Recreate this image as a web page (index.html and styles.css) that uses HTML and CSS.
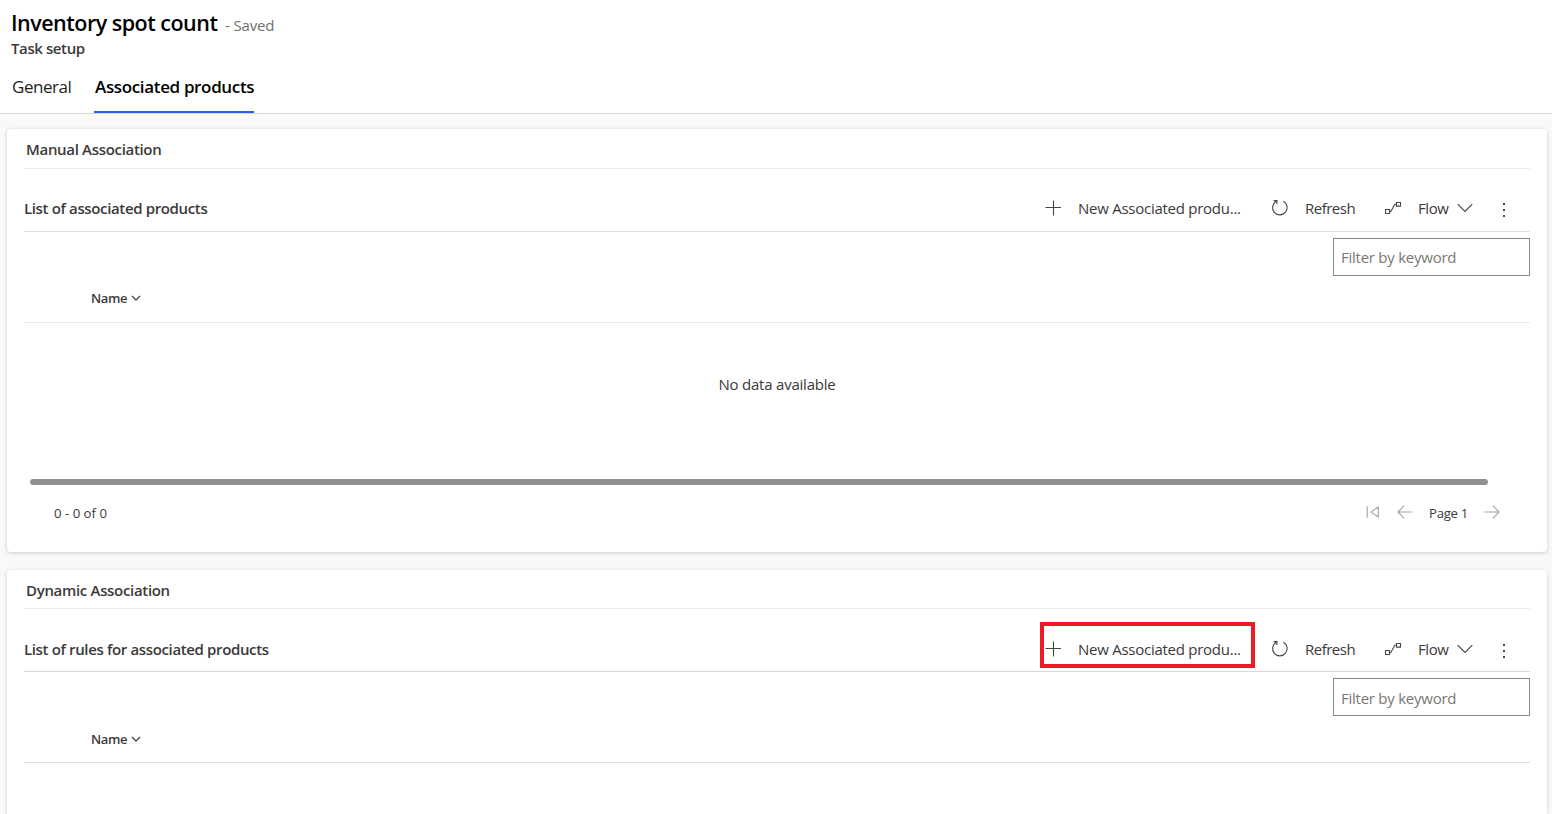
FILE: index.html
```
<!DOCTYPE html>
<html lang="en">
<head>
<meta charset="utf-8">
<title>Inventory spot count</title>
<link rel="stylesheet" href="styles.css">
</head>
<body>
<svg class="defs" aria-hidden="true">
  <symbol id="plus" viewBox="0 0 16 16"><path d="M8.5 .5v15M.5 7.5h16"/></symbol>
  <symbol id="refresh" viewBox="0 0 18 18"><path d="M12.4 2.2A7.3 7.3 0 1 1 5.2 2.3M2.6 1.6H5.9V5"/></symbol>
  <symbol id="flow" viewBox="0 0 18 14"><path d="M1.5 8.5h4v4h-4zM12.5 1.5h4v3.6h-4zM5.5 10.5h1.3L10.8 3.3h1.7"/></symbol>
  <symbol id="chevron" viewBox="0 0 16 10"><path d="M.7 1.2 8 8.5 15.3 1.2"/></symbol>
  <symbol id="sort" viewBox="0 0 10 6"><path d="M1 1l4 4 4-4"/></symbol>
  <symbol id="first" viewBox="0 0 14 14"><path d="M1.2 1.2v11.6M12.3 2v10L5 7z"/></symbol>
  <symbol id="left" viewBox="0 0 16 14"><path d="M15.5 7H1M7.2 .7.9 7l6.3 6.3"/></symbol>
  <symbol id="right" viewBox="0 0 16 14"><path d="M.5 7H15M8.8 .7 15.1 7l-6.3 6.3"/></symbol>
</svg>

<header class="page-header">
  <div class="title-row"><h1 class="title">Inventory spot count</h1><span class="saved">- Saved</span></div>
  <div class="entity">Task setup</div>
  <nav class="tabs"><a class="tab">General</a><a class="tab tab-active">Associated products</a></nav>
</header>

<main class="content">
  <section class="card">
    <h2 class="card-title">Manual Association</h2>
    <div class="toolbar">
      <h3 class="list-title">List of associated products</h3>
      <div class="commands">
        <button class="command command-new"><svg class="i-plus"><use href="#plus"/></svg><span class="new-label">New Associated produ...</span></button>
        <button class="command command-refresh"><svg class="i-refresh"><use href="#refresh"/></svg><span>Refresh</span></button>
        <button class="command command-flow"><svg class="i-flow"><use href="#flow"/></svg><span>Flow</span><svg class="i-chevron"><use href="#chevron"/></svg></button>
        <button class="more" aria-label="More"><i></i><i></i><i></i></button>
      </div>
    </div>
    <div class="filter-row"><input class="filter" placeholder="Filter by keyword"></div>
    <div class="columns"><span>Name</span><svg class="i-sort"><use href="#sort"/></svg></div>
    <div class="empty">No data available</div>
    <div class="scrollbar"></div>
    <footer class="pager">
      <span class="range">0 - 0 of 0</span>
      <svg class="i-first"><use href="#first"/></svg>
      <svg class="i-left"><use href="#left"/></svg>
      <span class="page">Page 1</span>
      <svg class="i-right"><use href="#right"/></svg>
    </footer>
  </section>

  <section class="card card-dynamic">
    <h2 class="card-title">Dynamic Association</h2>
    <div class="toolbar">
      <h3 class="list-title">List of rules for associated products</h3>
      <div class="commands">
        <button class="command command-new highlighted"><svg class="i-plus"><use href="#plus"/></svg><span class="new-label">New Associated produ...</span></button>
        <button class="command command-refresh"><svg class="i-refresh"><use href="#refresh"/></svg><span>Refresh</span></button>
        <button class="command command-flow"><svg class="i-flow"><use href="#flow"/></svg><span>Flow</span><svg class="i-chevron"><use href="#chevron"/></svg></button>
        <button class="more" aria-label="More"><i></i><i></i><i></i></button>
      </div>
    </div>
    <div class="filter-row"><input class="filter" placeholder="Filter by keyword"></div>
    <div class="columns"><span>Name</span><svg class="i-sort"><use href="#sort"/></svg></div>
  </section>
</main>
</body>
</html>
```
FILE: styles.css
```
*, *::after { box-sizing: border-box; }
body {
  margin: 0;
  height: 814px;
  overflow: hidden;
  display: flex;
  flex-direction: column;
  background: #faf9f8;
  color: #3b3a39;
  font: 400 15px/20px "Open Sans", "Noto Sans", sans-serif;
}
h1, h2, h3 { margin: 0; }
svg { flex: none; fill: none; stroke: #484644; stroke-width: 1.1; }
.defs { position: absolute; width: 0; height: 0; }

/* Header */
.page-header { flex: none; height: 114px; background: #fff; border-bottom: 1px solid #d6d6d6; padding: 8px 0 0 11px; }
.title-row { display: flex; align-items: baseline; height: 30px; }
.title { font-size: 21.5px; line-height: 30px; font-weight: 600; letter-spacing: -.5px; color: #000; width: 214px; white-space: nowrap; }
.saved { color: #706f6e; letter-spacing: -.15px; }
.entity { font-weight: 550; letter-spacing: -.4px; }
.tabs { display: flex; gap: 23px; height: 55px; }
.tab { font-size: 17px; line-height: 58px; letter-spacing: -.45px; color: #201f1e; width: 61px; padding-left: 1px; white-space: nowrap; }
.tab-active { width: 160px; margin-left: -1px; font-weight: 600; letter-spacing: -.35px; color: #000; border-bottom: 2px solid #2266e3; }

/* Cards */
.content { flex: 1; min-height: 0; padding: 15px 5px 0 7px; }
.card {
  height: 423px;
  margin-bottom: 18px;
  padding: 0 17px;
  background: #fff;
  border-radius: 4px;
  box-shadow: 0 1px 4px rgba(0, 0, 0, .18);
}
.card-title { height: 40px; padding: 10px 0 0 2px; border-bottom: 1px solid #edebe9; font-size: 15px; line-height: 20px; font-weight: 600; letter-spacing: -.32px; }
.toolbar { height: 63px; padding-top: 19px; border-bottom: 1px solid #e1dfdd; display: flex; justify-content: space-between; align-items: flex-start; }
.list-title { font-size: 15px; line-height: 40px; font-weight: 600; letter-spacing: -.36px; }
.commands { display: flex; height: 40px; margin-right: 17px; }
.command { display: flex; align-items: center; height: 40px; padding: 0; border: 0; background: none; color: inherit; font: inherit; letter-spacing: -.26px; white-space: nowrap; }
.command-new { position: relative; width: 226px; }
.new-label { margin-left: 17px; }
.command-refresh { width: 113px; letter-spacing: -.5px; }
.command-refresh span { margin-left: 16px; }
.command-flow { width: 115px; letter-spacing: -.4px; }
.command-flow span { width: 32px; margin: 0 7px 0 16px; text-align: left; }
.more { display: flex; flex-direction: column; gap: 4px; width: 14px; height: 40px; padding: 15px 0 0 4px; border: 0; background: none; }
.more i { width: 2px; height: 2px; background: #484644; }
.highlighted::after { content: ""; position: absolute; left: -5px; top: -7px; width: 215px; height: 46px; border: 4px solid #ed1c24; }
.i-plus { width: 16px; height: 16px; }
.i-refresh { width: 18px; height: 18px; }
.i-flow { width: 18px; height: 14px; }
.i-chevron { width: 16px; height: 10px; }
.i-sort { width: 10px; height: 6px; stroke-width: 1.3; }

.filter-row { display: flex; justify-content: flex-end; height: 44px; padding-top: 6px; }
.filter { width: 197px; height: 38px; padding: 0 7px; border: 1px solid #8a8886; border-radius: 0; font: inherit; letter-spacing: -.25px; }
.filter::placeholder { color: #797775; }
.columns { display: flex; align-items: center; gap: 4px; height: 47px; padding: 0 0 2px 67px; border-bottom: 1px solid #edebe9; font-size: 13px; font-weight: 600; letter-spacing: -.35px; }
.empty { height: 156px; line-height: 123px; text-align: center; letter-spacing: -.22px; }
.scrollbar { height: 6px; width: 1458px; margin-left: 6px; border-radius: 3px; background: #919191; }

/* Pager */
.pager { display: flex; align-items: center; height: 56px; padding: 0 30px; font-size: 13.2px; }
.pager svg { stroke: #a6a5a4; margin-bottom: 3px; }
.range { margin-right: auto; }
.i-first { width: 14px; height: 14px; margin-right: 17px; }
.i-left { width: 16px; height: 14px; margin-right: 16px; }
.page { width: 40px; margin-right: 15px; letter-spacing: -.3px; white-space: nowrap; }
.i-right { width: 16px; height: 14px; }

/* Second card is cut off by the bottom of the window */
.card-dynamic { height: 244px; margin-bottom: 0; border-radius: 4px 4px 0 0; }
.card-dynamic .card-title { height: 39px; }
.card-dynamic .toolbar { padding-top: 20px; border-color: #d8d7d6; }
.card-dynamic .filter { padding-top: 2px; }
.card-dynamic .columns { padding-bottom: 0; border-color: #dddcda; }
```
